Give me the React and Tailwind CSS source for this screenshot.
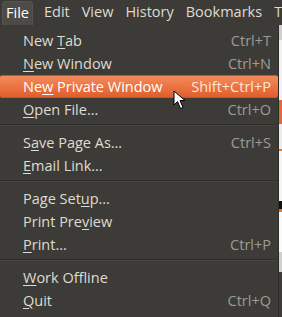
import React from 'react';

const items = [
    { pre: 'New ', u: 'T', post: 'ab', key: 'Ctrl+T' },
    { pre: '', u: 'N', post: 'ew Window', key: 'Ctrl+N' },
    { pre: 'Ne', u: 'w', post: ' Private Window', key: 'Shift+Ctrl+P', active: true },
    { pre: '', u: 'O', post: 'pen File…', key: 'Ctrl+O' },
    { sep: true },
    { pre: 'S', u: 'a', post: 've Page As…', key: 'Ctrl+S' },
    { pre: '', u: 'E', post: 'mail Link…', key: '' },
    { sep: true },
    { pre: 'Page Set', u: 'u', post: 'p…', key: '' },
    { pre: 'Print Pre', u: 'v', post: 'iew', key: '' },
    { pre: '', u: 'P', post: 'rint…', key: 'Ctrl+P' },
    { sep: true },
    { pre: '', u: 'W', post: 'ork Offline', key: '' },
    { pre: '', u: 'Q', post: 'uit', key: 'Ctrl+Q' },
];

const menus = ['File', 'Edit', 'View', 'History', 'Bookmarks', 'T'];

function Cursor() {
    return (
        <svg className="absolute left-[173px] top-[90px]" width="14" height="20" viewBox="0 0 14 20">
            <path d="M1 1 L1 15 L4.5 11.5 L7.5 18.5 L10 17.5 L7 10.5 L12 10.5 Z" fill="#fff" stroke="#000" strokeWidth="1" strokeLinejoin="round" />
        </svg>
    );
}

export default function App() {
    return (
        <div className="relative w-[282px] h-[317px] overflow-hidden bg-[#3c3b37] text-[#dfdbd2]" style={{ fontFamily: '"Open Sans", "DejaVu Sans", sans-serif' }}>
            {/* menubar */}
            <div className="flex items-end h-[25px] pl-[2px] text-[14.5px]">
                {menus.map((m, i) => (
                    <div key={m} className={`h-[24px] flex items-center pb-[2px] ${i === 0 ? 'px-[3px] mr-[5px] bg-[#4c4b46] rounded-t-[4px] border border-b-0 border-[#55544f] text-white' : 'px-[6px]'}`}>
                        {m}
                    </div>
                ))}
            </div>

            {/* page behind, seen at the right edge */}
            <div className="absolute right-0 top-[25px] w-[3px] h-[292px] flex flex-col">
                <div className="h-[15px] bg-[#cfcfcf]" />
                <div className="h-[60px] bg-[#f2f2f2]" />
                <div className="h-[24px] bg-[#e06a35]" />
                <div className="h-[25px] bg-[#ececec]" />
                <div className="h-[2px] bg-[#e07b2c]" />
                <div className="h-[50px] bg-[#f5f5f5]" />
                <div className="h-[8px] bg-[#111]" />
                <div className="h-[3px] bg-[#e07b2c]" />
                <div className="h-[40px] bg-[#fafafa]" />
                <div className="h-[20px] bg-[#cfcfcf]" />
                <div className="flex-1 bg-[#3c3b37]" />
            </div>

            {/* dropdown */}
            <div className="absolute left-0 top-[25px] w-[279px] h-[300px] bg-[#3c3b37] border-r border-[#2c2b28] pt-[4px] text-[14.5px]">
                {items.map((it, i) =>
                    it.sep ? (
                        <div key={i} className="h-[10px] pt-[3px]">
                            <div className="h-[1px] bg-[#2e2d2a]" />
                            <div className="h-[1px] bg-[#46453f]" />
                        </div>
                    ) : (
                        <div
                            key={i}
                            className={`h-[23px] flex items-center justify-between pl-[23px] pr-[7px] ${it.active ? 'bg-gradient-to-b from-[#f48a5a] to-[#e05e2c] border-y border-[#c8522a] text-white rounded-[2px]' : ''}`}
                        >
                            <span>
                                {it.pre}
                                <u className="underline-offset-[2px]">{it.u}</u>
                                {it.post}
                            </span>
                            <span className={it.active ? 'text-[#fde6da]' : 'text-[#9d9b95]'}>{it.key}</span>
                        </div>
                    )
                )}
            </div>
            <Cursor />
        </div>
    );
}
